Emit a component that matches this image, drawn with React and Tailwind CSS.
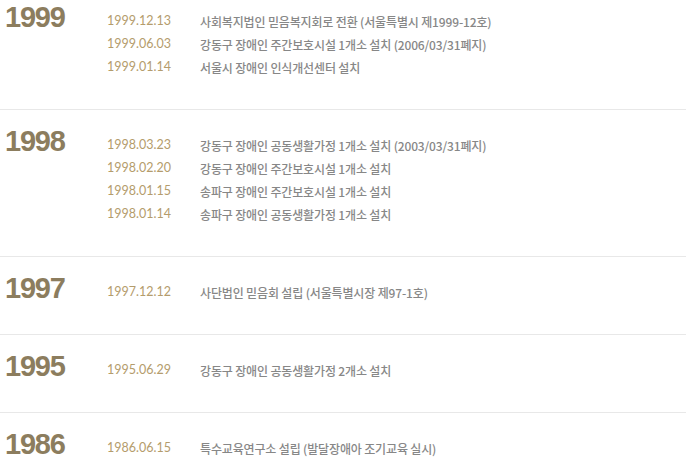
const history = [
  {
    year: '1999',
    items: [
      ['1999.12.13', '사회복지법인 믿음복지회로 전환 (서울특별시 제1999-12호)'],
      ['1999.06.03', '강동구 장애인 주간보호시설 1개소 설치 (2006/03/31폐지)'],
      ['1999.01.14', '서울시 장애인 인식개선센터 설치'],
    ],
  },
  {
    year: '1998',
    items: [
      ['1998.03.23', '강동구 장애인 공동생활가정 1개소 설치 (2003/03/31폐지)'],
      ['1998.02.20', '강동구 장애인 주간보호시설 1개소 설치'],
      ['1998.01.15', '송파구 장애인 주간보호시설 1개소 설치'],
      ['1998.01.14', '송파구 장애인 공동생활가정 1개소 설치'],
    ],
  },
  {
    year: '1997',
    items: [['1997.12.12', '사단법인 믿음회 설립 (서울특별시장 제97-1호)']],
  },
  {
    year: '1995',
    items: [['1995.06.29', '강동구 장애인 공동생활가정 2개소 설치']],
  },
  {
    year: '1986',
    items: [['1986.06.15', '특수교육연구소 설립 (발달장애아 조기교육 실시)']],
  },
];

const YearBlock = ({ year, items, first, last }) => {
  return (
    <div
      className={`flex items-start ${first ? 'pt-[10px]' : 'pt-[24px]'} ${
        last ? 'pb-[30px]' : 'pb-[30px] border-b border-[#e8e8e8]'
      }`}
    >
      <div className="w-[107px] shrink-0 pl-[5px] -mt-[7px]">
        <span className="font-['Liberation_Sans',Arial,sans-serif] font-bold text-[29px] leading-[28px] tracking-[-1.2px] text-[#8c7d5e]">
          {year}
        </span>
      </div>
      <ul className="flex flex-col">
        {items.map(([date, text], i) => (
          <li key={i} className="flex h-[23px] items-center">
            <span className="w-[93px] shrink-0 font-['Lato',sans-serif] text-[12.5px] text-[#b49c6c]">
              {date}
            </span>
            <span className="font-['Noto_Sans_CJK_KR','Noto_Sans',sans-serif] font-medium text-[12px] tracking-[-0.15px] text-[#878787]">
              {text}
            </span>
          </li>
        ))}
      </ul>
    </div>
  );
};

const App = () => {
  return (
    <div className="w-[686px] h-[470px] overflow-hidden bg-white">
      {history.map((h, i) => (
        <YearBlock
          key={h.year}
          year={h.year}
          items={h.items}
          first={i === 0}
          last={i === history.length - 1}
        />
      ))}
    </div>
  );
};

export default App;
